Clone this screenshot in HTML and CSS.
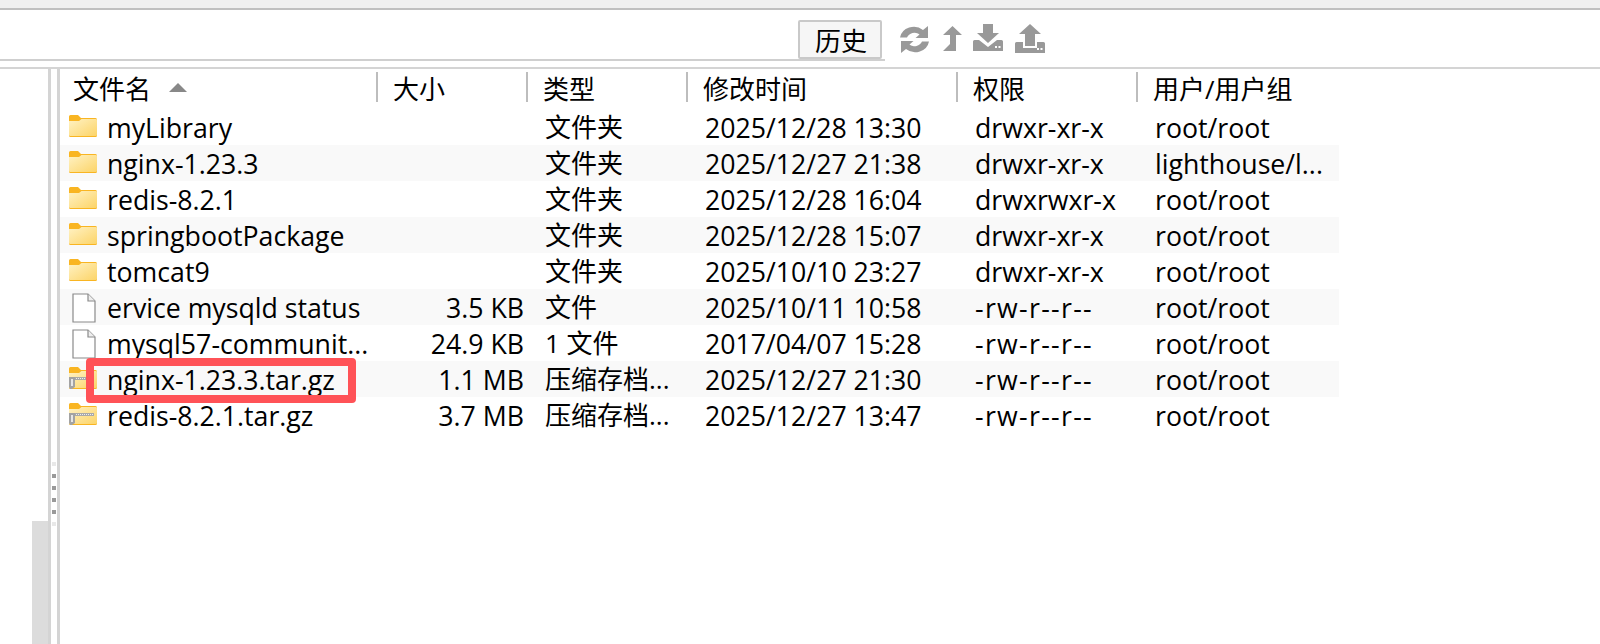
FILE: index.html
```html
<!DOCTYPE html>
<html lang="zh">
<head>
<meta charset="utf-8">
<title>文件列表</title>
<link rel="stylesheet" href="styles.css">
</head>
<body>
<svg class="defs" width="0" height="0" aria-hidden="true">
  <defs>
    <linearGradient id="fg" x1="0" y1="0" x2="1" y2="1">
      <stop offset="0" stop-color="#fff2c4"/><stop offset="1" stop-color="#fcd468"/>
    </linearGradient>
    <symbol id="folder" viewBox="0 0 28 22">
      <path d="M0 1.500A1.500 1.500 0 0 1 1.500 0H9l3 3h14.500A1.500 1.500 0 0 1 28 4.500V20.500A1.500 1.500 0 0 1 26.500 22H1.500A1.500 1.500 0 0 1 0 20.500Z" fill="#f9b522"/>
      <path d="M0 6L10 6L12.500 4H27A1 1 0 0 1 28 5V20A1 1 0 0 1 27 21H1A1 1 0 0 1 0 20Z" fill="url(#fg)"/>
    </symbol>
    <symbol id="file" viewBox="0 0 24 30">
      <path d="M1 1H16L23 8V29H1Z" fill="#fff" stroke="#8a8a8a" stroke-width="1.200"/>
      <path d="M16 1V8H23" fill="#eee" stroke="#8a8a8a" stroke-width="1.200"/>
    </symbol>
    <symbol id="zip" viewBox="0 0 28 22">
      <use href="#folder" width="28" height="22"/>
      <rect x="0" y="10" width="25" height="3" fill="#a9a9a9"/>
      <path d="M5 11.500H25" stroke="#eee" stroke-width="1" stroke-dasharray="1 1"/>
      <path d="M0 10H6V20L3 22H1L0 20Z" fill="#a3a3a3"/>
      <rect x="2" y="12" width="2" height="7" fill="#e6e6e6"/>
    </symbol>
  </defs>
</svg>
<div class="topband"></div>
<div class="toolbar">
  <div class="tabline">
    <button class="tab">历史</button>
  </div>
  <div class="tools">
    <svg class="tool refresh" viewBox="0 0 29 27"><path d="M0 11.500A14 13 0 0 1 23 4L28 0V12H15.500L19.500 8.500A8 7.500 0 0 0 7 11.500Z M29 15.500A14 13 0 0 1 6 23L1 27V15H13.500L9.500 18.500A8 7.500 0 0 0 22 15.500Z" fill="#999"/></svg>
    <svg class="tool up" viewBox="0 0 19 25"><path d="M9.500 0L19 9H13V25H0L7 18V9H0Z" fill="#999"/></svg>
    <svg class="tool dl" viewBox="0 0 30 27"><path d="M10 0H20V9H26L15 19L4 9H10Z" fill="#999"/><path d="M1.500 16H6L15 23L24 16H28.500A1.500 1.500 0 0 1 30 17.500V27H0V17.500A1.500 1.500 0 0 1 1.500 16Z" fill="#999"/><rect x="22" y="22" width="2" height="2" fill="#fff"/><rect x="25.500" y="22" width="2" height="2" fill="#fff"/></svg>
    <svg class="tool ul" viewBox="0 0 30 29"><path d="M15 0L26 10H20V22H10V10H4Z" fill="#999"/><path d="M1.500 18H8V24H22V18H28.500A1.500 1.500 0 0 1 30 19.500V29H0V19.500A1.500 1.500 0 0 1 1.500 18Z" fill="#999"/><rect x="22" y="24" width="2" height="2" fill="#fff"/><rect x="25.500" y="24" width="2" height="2" fill="#fff"/></svg>
  </div>
</div>
<main class="panes">
  <aside class="tree">
    <div class="thumb"></div>
  </aside>
  <div class="splitter">
    <i class="dot faint"></i><i class="dot"></i><i class="dot"></i><i class="dot"></i><i class="dot"></i><i class="dot faint"></i>
  </div>
  <section class="list">
    <div class="head">
      <div class="hcell c-name">文件名<span class="sort"></span></div>
      <div class="hcell c-size">大小</div>
      <div class="hcell c-type">类型</div>
      <div class="hcell c-time">修改时间</div>
      <div class="hcell c-perm">权限</div>
      <div class="hcell c-user">用户/用户组</div>
    </div>
    <div class="row"><div class="name"><svg class="ico"><use href="#folder"/></svg>myLibrary</div><div class="size"></div><div class="type">文件夹</div><div class="time">2025/12/28 13:30</div><div class="perm">drwxr-xr-x</div><div class="user">root/root</div></div>
    <div class="row"><div class="name"><svg class="ico"><use href="#folder"/></svg>nginx-1.23.3</div><div class="size"></div><div class="type">文件夹</div><div class="time">2025/12/27 21:38</div><div class="perm">drwxr-xr-x</div><div class="user">lighthouse/l...</div></div>
    <div class="row"><div class="name"><svg class="ico"><use href="#folder"/></svg>redis-8.2.1</div><div class="size"></div><div class="type">文件夹</div><div class="time">2025/12/28 16:04</div><div class="perm">drwxrwxr-x</div><div class="user">root/root</div></div>
    <div class="row"><div class="name"><svg class="ico"><use href="#folder"/></svg>springbootPackage</div><div class="size"></div><div class="type">文件夹</div><div class="time">2025/12/28 15:07</div><div class="perm">drwxr-xr-x</div><div class="user">root/root</div></div>
    <div class="row"><div class="name"><svg class="ico"><use href="#folder"/></svg>tomcat9</div><div class="size"></div><div class="type">文件夹</div><div class="time">2025/10/10 23:27</div><div class="perm">drwxr-xr-x</div><div class="user">root/root</div></div>
    <div class="row"><div class="name"><svg class="ico fileico"><use href="#file"/></svg>ervice mysqld status</div><div class="size">3.5 KB</div><div class="type">文件</div><div class="time">2025/10/11 10:58</div><div class="perm dash">-rw-r--r--</div><div class="user">root/root</div></div>
    <div class="row"><div class="name"><svg class="ico fileico"><use href="#file"/></svg>mysql57-communit...</div><div class="size">24.9 KB</div><div class="type">1 文件</div><div class="time">2017/04/07 15:28</div><div class="perm dash">-rw-r--r--</div><div class="user">root/root</div></div>
    <div class="row"><div class="name"><svg class="ico"><use href="#zip"/></svg>nginx-1.23.3.tar.gz<span class="mark"></span></div><div class="size">1.1 MB</div><div class="type">压缩存档...</div><div class="time">2025/12/27 21:30</div><div class="perm dash">-rw-r--r--</div><div class="user">root/root</div></div>
    <div class="row"><div class="name"><svg class="ico"><use href="#zip"/></svg>redis-8.2.1.tar.gz</div><div class="size">3.7 MB</div><div class="type">压缩存档...</div><div class="time">2025/12/27 13:47</div><div class="perm dash">-rw-r--r--</div><div class="user">root/root</div></div>
  </section>
</main>
</body>
</html>
```
FILE: styles.css
```css
* { box-sizing: border-box; }
html, body { margin: 0; height: 644px; overflow: hidden; }
body {
  background: #fff;
  color: #000;
  font-family: "Open Sans", "Noto Sans CJK SC", sans-serif;
  font-size: 26.700px;
  display: flex;
  flex-direction: column;
}
.defs { position: absolute; }
.topband { height: 10px; background: #efefef; border-bottom: 2px solid #bfbfbf; flex: none; }
.toolbar { height: 57px; flex: none; display: flex; align-items: flex-start; }
.tabline { width: 885px; height: 51px; border-bottom: 2px solid #cfcfcf; display: flex; justify-content: flex-end; padding: 10px 3px 0 0; flex: none; }
.tab {
  width: 84px; height: 39px; padding: 2px 0 0 2px; font: inherit; font-size: 26px; line-height: 34px; color: #000;
  background: #f6f6f6; border: 2px solid #c9c9c9; border-radius: 2px;
}
.tools { display: flex; align-items: flex-start; padding: 14px 0 0 15px; }
.tool { display: block; flex: none; }
.refresh { width: 29px; height: 27px; margin-top: 2px; }
.up { width: 19px; height: 25px; margin: 2px 0 0 14px; }
.dl { width: 30px; height: 27px; margin-left: 11px; }
.ul { width: 30px; height: 29px; margin-left: 12px; }
.panes { flex: 1; display: flex; border-top: 2px solid #d4d4d4; min-height: 0; }
.tree { width: 51px; flex: none; border-right: 3px solid #d4d4d4; position: relative; }
.thumb { position: absolute; right: 0; bottom: 0; width: 16px; height: 123px; background: #dcdcdc; }
.splitter { width: 6px; flex: none; display: flex; flex-direction: column; align-items: center; gap: 8px; padding-top: 393px; }
.dot { display: block; width: 4px; height: 4px; background: #999; flex: none; }
.dot.faint { background: #e8e8e8; }
.list { flex: 1; border-left: 3px solid #d4d4d4; padding: 3px 0 0; min-width: 0; }
.head { display: grid; grid-template-columns: 316px 150px 160px 270px 180px 200px; height: 37px; align-items: start; font-size: 26px; }
.hcell { height: 30px; line-height: 34px; padding-left: 17px; position: relative; white-space: nowrap; }
.hcell.c-name { padding-left: 13px; }
.hcell + .hcell::before { content: ""; position: absolute; left: 0; top: 0; height: 30px; width: 2px; background: #bdbdbd; }
.sort { display: inline-block; width: 0; height: 0; border: 9px solid transparent; border-top: 0; border-bottom: 9px solid #888; margin-left: 18px; vertical-align: 7px; }
.row { display: grid; grid-template-columns: 317px 150px 160px 270px 180px 200px; width: 1279px; height: 36px; line-height: 37px; white-space: nowrap; }
.row:nth-child(odd) { background: #f9f9f9; }
.name { display: flex; align-items: center; padding-left: 9px; position: relative; }
.ico { width: 28px; height: 22px; flex: none; margin-right: 10px; margin-top: -4px; }
.fileico { width: 24px; height: 30px; margin: 0 11px 0 3px; }
.size { text-align: right; padding-right: 3px; }
.row .type { padding-left: 18px; font-size: 26px; }
.row .time, .row .perm, .row .user { padding-left: 18px; }
.row .dash { letter-spacing: 1.300px; }
.mark { position: absolute; left: 26px; top: -3px; width: 270px; height: 45px; border: 8px solid #ff5257; border-radius: 4px; pointer-events: none; }
```
